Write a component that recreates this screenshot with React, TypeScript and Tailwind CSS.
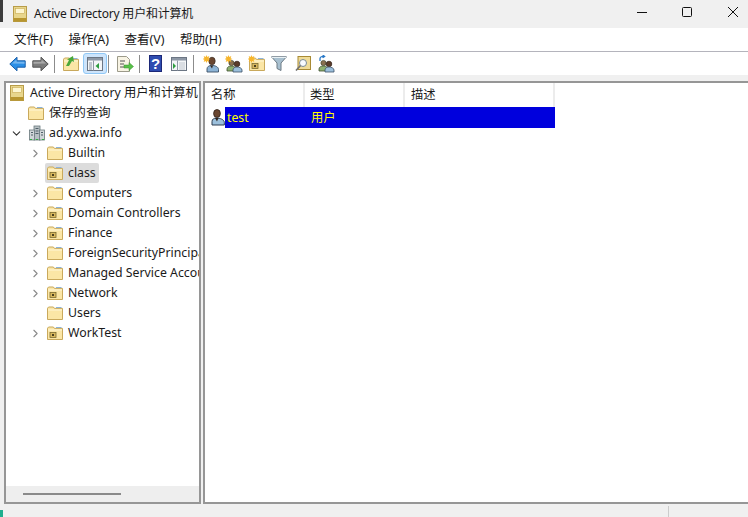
import { ChevronDown, ChevronRight } from "lucide-react";

const FONT = "font-['Noto_Sans','Noto_Sans_CJK_SC',sans-serif]";

function Star() {
  return <path d="M3.500 0l.8 2 2-.9-.7 2.100 2 .8-2 .8.7 2.100-2-.9-.8 2-.8-2-2 .9.7-2.100-2-.8 2-.8-.7-2.100 2 .9z" fill="#f7b52c" />;
}

function Folder({ ou }: { ou?: boolean }) {
  return (
    <svg width="16" height="14" viewBox="0 0 16 14" className="shrink-0">
      <path d="M.5 13.500V2.200L1.600 1h4.800l1 1.400h8.100v11.100z" fill="#fbe6a6" stroke="#c9a95c" />
      <path d="M1 4h14" stroke="#fff6d6" />
      <path d="M9 1.500h5.500" stroke="#8fb4d8" />
      {ou && <rect x="3" y="6.500" width="6" height="5" fill="#d8b860" stroke="#7a6a30" strokeWidth=".8" />}
      {ou && <rect x="5" y="8" width="2" height="2" fill="#4a4020" />}
    </svg>
  );
}

function Book({ size = 14 }: { size?: number }) {
  return (
    <svg width={size} height={size + 2} viewBox="0 0 14 16" className="shrink-0">
      <rect x=".5" y=".5" width="13" height="15" fill="#e8d68c" stroke="#b89c48" />
      <rect x="2.500" y="2.500" width="9" height="5" fill="#fdf6d0" stroke="#c8aa50" strokeWidth=".6" />
      <rect x=".5" y="12" width="13" height="3.500" fill="#b8962f" />
    </svg>
  );
}

function Domain() {
  return (
    <svg width="16" height="16" viewBox="0 0 16 16" className="shrink-0">
      <rect x="5" y="1" width="6" height="14" fill="#b8c0c4" stroke="#68787c" strokeWidth=".8" />
      <rect x="0.5" y="5" width="5" height="10" fill="#d0d6d8" stroke="#68787c" strokeWidth=".8" />
      <rect x="10.500" y="5" width="5" height="10" fill="#d0d6d8" stroke="#68787c" strokeWidth=".8" />
      <path d="M6.500 3.500h3M6.500 6h3M6.500 8.500h3M2 7.500h2M2 10h2M12 7.500h2M12 10h2" stroke="#506068" />
      <path d="M1 14.500h2M13 14.500h2M7 14.500h2" stroke="#30b040" strokeWidth="1.200" />
    </svg>
  );
}

function ListUser() {
  return (
    <svg width="14" height="17" viewBox="0 0 14 17" className="shrink-0">
      <ellipse cx="6" cy="4.500" rx="3.400" ry="4" fill="#6a4630" stroke="#2e2018" strokeWidth=".8" />
      <path d="M1 16v-3.400C1 10.200 3 9 5.500 9c3.400 0 7.800 1.600 7.800 4.400V16z" fill="#9cc0dc" stroke="#2c3c50" />
      <path d="M4 9l2 3.500L7.500 9z" fill="#30241c" />
    </svg>
  );
}

function StarUser() {
  return (
    <svg width="16" height="18" viewBox="0 0 16 18" className="shrink-0">
      <ellipse cx="9" cy="6" rx="3.200" ry="3.800" fill="#6a4630" stroke="#3a2a20" strokeWidth=".7" />
      <path d="M4 17v-3c0-2.400 2.200-3.600 4.600-3.600 3.400 0 6.900 1.400 6.900 4V17z" fill="#8db4d6" stroke="#3c5068" strokeWidth=".9" />
      <path d="M7 10.400l2 3 1-3z" fill="#30241c" />
      <Star />
    </svg>
  );
}

function Users({ star, arrow }: { star?: boolean; arrow?: boolean }) {
  return (
    <svg width="18" height="18" viewBox="0 0 18 18" className="shrink-0">
      <circle cx="6.500" cy="8" r="2.600" fill="#8a7050" stroke="#404830" strokeWidth=".7" />
      <path d="M2 16v-2c0-2 2-3 4.500-3s4 1 4 3v2z" fill="#8cb070" stroke="#405030" strokeWidth=".8" />
      <circle cx="12" cy="9" r="2.800" fill="#5a3c2a" stroke="#302018" strokeWidth=".7" />
      <path d="M8 17v-2c0-2 2-3 4-3s5 1 5 3v2z" fill="#9cc0dc" stroke="#3c5068" strokeWidth=".8" />
      {star && <Star />}
      {arrow && <path d="M3 6V3.400C3 1.800 5 1.200 7 1.400M5.600 0l2 1.400-2 1.400" fill="none" stroke="#2878c8" strokeWidth="1.300" />}
    </svg>
  );
}

function Arrow({ dir, color, stroke }: { dir: "l" | "r"; color: string; stroke: string }) {
  return (
    <svg width="17" height="16" viewBox="0 0 17 16" className={dir === "r" ? "shrink-0 -scale-x-100" : "shrink-0"}>
      <path d="M.8 8L8 1.200v3.600h8.200v6.400H8v3.600z" fill={color} stroke={stroke} />
      <path d="M3 7.500L7.600 3.600v2.200h8v2z" fill="#fff" opacity=".35" />
    </svg>
  );
}

function Pane({ active }: { active?: boolean }) {
  return (
    <svg width="16" height="14" viewBox="0 0 16 14" className="shrink-0">
      <rect x=".5" y=".5" width="15" height="13" fill="#f4f6f8" stroke="#6c7684" />
      <rect x="1" y="1" width="14" height="2.500" fill="#8e98a6" />
      <path d="M6.500 3.500v10" stroke="#8e98a6" />
      {active ? (
        <>
          <path d="M2 6h3M2 8h3M2 10h3M2 12h3" stroke="#8e98a6" />
          <path d="M12 6v6L8.500 9z" fill="#2e9e40" />
        </>
      ) : (
        <>
          <path d="M2 6l3 3-3 3z" fill="#2e9e40" />
          <path d="M8 6h6M8 8h6M8 10h6M8 12h6" stroke="#c0c6ce" />
        </>
      )}
    </svg>
  );
}

function Sep({ className }: { className: string }) {
  return <span className={`h-[18px] w-px bg-[#8c8c8c] ${className}`} />;
}

function Toolbar() {
  return (
    <div className="flex h-[23px] items-center bg-white pl-[9px]">
      <Arrow dir="l" color="#2b8fe6" stroke="#1c5fa8" />
      <span className="ml-[6px] flex">
        <Arrow dir="r" color="#7c7c7c" stroke="#555555" />
      </span>
      <Sep className="ml-[5px]" />
      <span className="relative ml-[8px] flex">
        <Folder />
        <svg width="12" height="12" viewBox="0 0 12 12" className="absolute left-[2px] top-[-2px]">
          <path d="M1 11L4 5 2 4.500 8 1l1 6-2-1-3 5z" fill="#4aa83a" />
        </svg>
      </span>
      <span className="ml-[4px] flex h-[21px] w-[24px] items-center justify-center rounded-[3px] border border-[#90c8f6] bg-[#cde4fb]">
        <Pane active />
      </span>
      <Sep className="ml-[1px]" />
      <span className="ml-[8px] flex">
        <svg width="17" height="16" viewBox="0 0 17 16" className="shrink-0">
          <path d="M.5.500h9l3 3v12H.5z" fill="#f8f4e4" stroke="#9c9a8a" />
          <path d="M3 5h5M3 8h4M3 11h4" stroke="#555555" />
          <path d="M7 9h5V6.500l4.500 4-4.500 4V12H7z" fill="#58c048" stroke="#3a9030" strokeWidth=".5" />
        </svg>
      </span>
      <Sep className="ml-[5px]" />
      <span className="ml-[9px] flex h-[17px] w-[13px] items-center justify-center border border-[#1c2878] bg-[#2e4cb0] font-['Liberation_Sans',sans-serif] text-[15px] font-bold leading-none text-white">
        ?
      </span>
      <span className="ml-[9px] flex">
        <Pane />
      </span>
      <Sep className="ml-[6px]" />
      <span className="ml-[9px] flex">
        <StarUser />
      </span>
      <span className="ml-[6px] flex">
        <Users star />
      </span>
      <span className="relative ml-[6px] flex">
        <Folder ou />
        <svg width="8" height="8" viewBox="0 0 8 8" className="absolute left-[-1px] top-[-2px]">
          <Star />
        </svg>
      </span>
      <span className="ml-[6px] flex">
        <svg width="16" height="15" viewBox="0 0 16 15">
          <path d="M.5.800h15L10 7v7.500L6 12.500V7z" fill="#a8c0d0" stroke="#6c7a84" />
          <path d="M1 1.500h14" stroke="#e8f0f4" />
        </svg>
      </span>
      <span className="ml-[8px] flex">
        <svg width="16" height="16" viewBox="0 0 16 16">
          <rect x="3" y=".5" width="12.500" height="13" fill="#f0dc98" stroke="#a88a34" />
          <circle cx="8" cy="7" r="3.500" fill="#f8fbff" stroke="#7a8a94" />
          <path d="M5.500 9.500L1 14.500" stroke="#707070" strokeWidth="1.600" />
        </svg>
      </span>
      <span className="ml-[6px] flex">
        <Users arrow />
      </span>
    </div>
  );
}

const nodes = [
  { name: "Builtin", arrow: true, ou: false },
  { name: "class", arrow: false, ou: true, selected: true },
  { name: "Computers", arrow: true, ou: false },
  { name: "Domain Controllers", arrow: true, ou: true },
  { name: "Finance", arrow: true, ou: true },
  { name: "ForeignSecurityPrincipals", arrow: true, ou: false },
  { name: "Managed Service Accounts", arrow: true, ou: false },
  { name: "Network", arrow: true, ou: true },
  { name: "Users", arrow: false, ou: false },
  { name: "WorkTest", arrow: true, ou: true },
];

function TreePane() {
  return (
    <div className="relative flex w-[197px] shrink-0 flex-col overflow-hidden border-2 border-[#969696] bg-white text-[12.3px] leading-[20px] text-[#1a1a1a]">
      <div className="flex h-[20px] items-center gap-[6px] whitespace-nowrap pl-[4px]">
        <Book />
        <span>Active Directory 用户和计算机</span>
      </div>
      <div className="flex h-[20px] items-center gap-[5px] pl-[22px]">
        <Folder />
        <span>保存的查询</span>
      </div>
      <div className="flex h-[20px] items-center pl-[4px]">
        <ChevronDown size={13} strokeWidth={2} className="text-[#333333]" />
        <span className="ml-[6px] flex"><Domain /></span>
        <span className="ml-[4px]">ad.yxwa.info</span>
      </div>
      {nodes.map((n) => (
        <div key={n.name} className="flex h-[20px] items-center whitespace-nowrap pl-[23px]">
          <span className="w-[16px] shrink-0">
            {n.arrow && <ChevronRight size={13} strokeWidth={2} className="text-[#8a8a8a]" />}
          </span>
          <span className={n.selected ? "flex h-[20px] items-center gap-[5px] rounded-[2px] bg-[#dcdcdc] pl-[2px] pr-[3px]" : "flex h-[20px] items-center gap-[5px] pl-[2px]"}>
            <Folder ou={n.ou} />
            <span>{n.name}</span>
          </span>
        </div>
      ))}
      <div className="absolute inset-x-0 bottom-0 flex h-[16px] items-center bg-[#eeeeee] pl-[17px]">
        <div className="h-[2px] w-[98px] bg-[#8a8a8a]" />
      </div>
    </div>
  );
}

function ListPane() {
  return (
    <div className="flex min-w-0 flex-1 flex-col border-2 border-r-0 border-[#969696] bg-white text-[12.3px] text-[#1a1a1a]">
      <div className="flex h-[24px]">
        <div className="flex w-[100px] items-center border-r-2 border-[#ececec] pl-[6px]">名称</div>
        <div className="flex w-[100px] items-center border-r-2 border-[#ececec] pl-[5px]">类型</div>
        <div className="flex w-[150px] items-center border-r-2 border-[#ececec] pl-[6px]">描述</div>
      </div>
      <div className="flex h-[21px] items-center pl-[6px]">
        <ListUser />
        <div className="flex h-[21px] w-[330px] items-center bg-[#0000dd] pt-[2px] text-[#ffff00]">
          <span className="w-[86px] pl-[2px]">test</span>
          <span>用户</span>
        </div>
      </div>
    </div>
  );
}

export default function App() {
  return (
    <div className={`${FONT} relative flex h-[517px] w-[748px] flex-col overflow-hidden bg-[#f0f0f0] text-[#1a1a1a]`}>
      <div className="absolute left-0 top-0 h-[22px] w-[3px] bg-[#3c3c3c]" />
      <div className="absolute bottom-0 left-0 h-[7px] w-[3px] bg-[#1fae8e]" />
      <div className="flex h-[28px] shrink-0 items-center pb-[1px] pl-[13px] text-[12px] tracking-[-0.2px]">
        <Book />
        <span className="ml-[7px]">Active Directory 用户和计算机</span>
        <div className="ml-auto flex items-center">
          <svg width="12" height="12" viewBox="0 0 12 12" className="mb-[3px] mr-[33px]">
            <path d="M1 6.500h10" stroke="#111111" />
          </svg>
          <svg width="12" height="12" viewBox="0 0 12 12" className="mb-[3px] mr-[34px]">
            <rect x="1.500" y="1.500" width="9" height="9" rx="1" fill="none" stroke="#111111" />
          </svg>
          <svg width="12" height="12" viewBox="0 0 12 12" className="mb-[3px] mr-[9px]">
            <path d="M1 1l10 10M11 1L1 11" stroke="#111111" />
          </svg>
        </div>
      </div>
      <div className="flex h-[23px] shrink-0 items-center gap-[15.5px] bg-white pl-[14px] pt-[2px] text-[12.5px]">
        <span>文件(F)</span>
        <span>操作(A)</span>
        <span>查看(V)</span>
        <span>帮助(H)</span>
      </div>
      <div className="h-px shrink-0 bg-[#b4b4bc]" />
      <Toolbar />
      <div className="flex min-h-0 flex-1 gap-[2px] pl-[4px] pt-[6px]">
        <TreePane />
        <ListPane />
      </div>
      <div className="flex h-[13px] shrink-0 justify-end pr-[79px]">
        <div className="mt-[2px] h-[11px] w-px bg-[#cccccc]" />
      </div>
    </div>
  );
}
